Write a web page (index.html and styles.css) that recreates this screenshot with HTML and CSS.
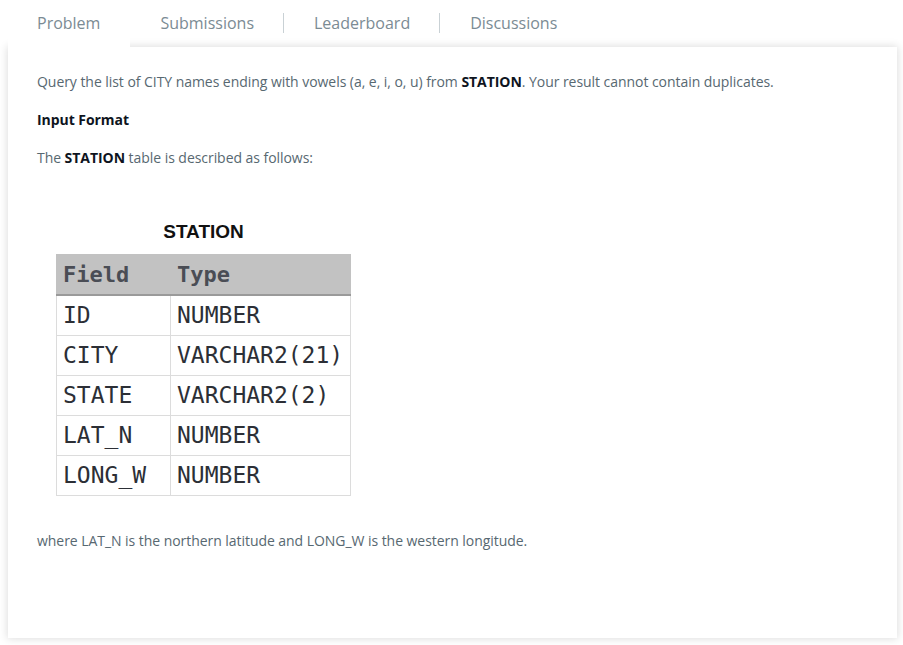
FILE: index.html
```html
<!DOCTYPE html>
<html>
<head>
<meta charset="utf-8">
<link rel="stylesheet" href="styles.css">
</head>
<body>
<div class="page">
  <nav class="tabs">
    <div class="tab active"><span>Problem</span></div>
    <div class="tab sep"><span>Submissions</span></div>
    <div class="tab sep"><span>Leaderboard</span></div>
    <div class="tab"><span>Discussions</span></div>
  </nav>
  <div class="card">
    <p class="p1">Query the list of CITY names ending with vowels (a, e, i, o, u) from <strong>STATION</strong>. Your result cannot contain duplicates.</p>
    <p class="p2"><strong>Input Format</strong></p>
    <p class="p3">The <strong>STATION</strong> table is described as follows:</p>
    <div class="figure">
      <div class="fig-title">STATION</div>
      <table class="schema">
        <thead>
          <tr><th class="c1">Field</th><th class="c2">Type</th></tr>
        </thead>
        <tbody>
          <tr><td class="c1">ID</td><td class="c2">NUMBER</td></tr>
          <tr><td class="c1">CITY</td><td class="c2">VARCHAR2(21)</td></tr>
          <tr><td class="c1">STATE</td><td class="c2">VARCHAR2(2)</td></tr>
          <tr><td class="c1">LAT_N</td><td class="c2">NUMBER</td></tr>
          <tr><td class="c1">LONG_W</td><td class="c2">NUMBER</td></tr>
        </tbody>
      </table>
    </div>
    <p class="p4">where LAT_N is the northern latitude and LONG_W is the western longitude.</p>
  </div>
</div>
</body>
</html>
```

FILE: styles.css
```css
html, body {
  margin: 0;
  padding: 0;
  background: #ffffff;
}
body {
  font-family: "Open Sans", "Liberation Sans", sans-serif;
  width: 903px;
  height: 645px;
  overflow: hidden;
}
.page {
  padding: 0 6px 0 8px;
}
.tabs {
  display: flex;
  height: 47px;
  position: relative;
  z-index: 2;
}
.tab {
  display: flex;
  align-items: center;
  padding: 0 30px 1px 30px;
  font-size: 16px;
  color: #7b8b94;
  position: relative;
}
.tab.active {
  background: #ffffff;
  padding-left: 29px;
  height: 49px;
  box-sizing: border-box;
  padding-bottom: 3px;
}
.tab.sep::after {
  content: "";
  position: absolute;
  right: 0;
  top: 13px;
  height: 20px;
  width: 1px;
  background: #c9d1d5;
}
.card {
  background: #ffffff;
  height: 591px;
  box-sizing: border-box;
  padding: 25px 29px 0 29px;
  box-shadow: 0 0 8px 1px rgba(0, 0, 0, 0.13);
  position: relative;
  z-index: 1;
  font-size: 14px;
  color: #576871;
  line-height: 20px;
  letter-spacing: -0.05px;
}
.card p {
  margin: 0;
}
.card strong {
  color: #0e141e;
  font-weight: 700;
}
.p2 {
  margin-top: 18px !important;
}
.p3 {
  margin-top: 18px !important;
}
.figure {
  margin-top: 53px;
  margin-left: 19px;
  width: 295px;
}
.fig-title {
  font-family: "Liberation Sans", Arial, sans-serif;
  font-weight: 700;
  font-size: 19px;
  color: #111;
  text-align: center;
  line-height: 22px;
  margin-bottom: 11px;
  letter-spacing: 0;
}
.schema {
  border-collapse: collapse;
  width: 295px;
  font-family: "DejaVu Sans Mono", "Liberation Mono", monospace;
  font-size: 23px;
  color: #2c2f36;
  letter-spacing: 0;
}
.schema th, .schema td {
  text-align: left;
  padding: 0 0 0 6px;
  height: 39px;
  border: 1px solid #dcdcdc;
  font-weight: 400;
  line-height: 39px;
}
.schema th {
  background: #c2c2c2;
  font-weight: 700;
  color: #4a4d55;
  border-color: #c2c2c2;
  border-bottom: 2px solid #9a9a9a;
  height: 38px;
  font-size: 22px;
}
.schema .c1 {
  width: 107px;
}
.p4 {
  margin-top: 35px !important;
}
```
